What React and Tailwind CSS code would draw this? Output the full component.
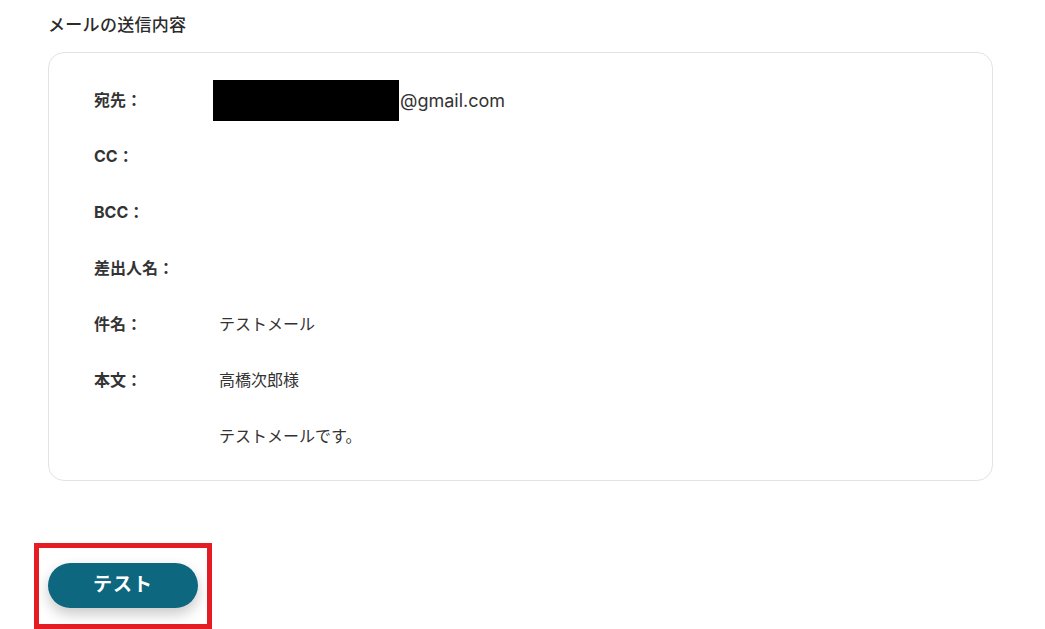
const rows = [
  { label: "宛先：", value: "email" },
  { label: "CC：", value: "" },
  { label: "BCC：", value: "" },
  { label: "差出人名：", value: "" },
  { label: "件名：", value: "テストメール" },
  { label: "本文：", value: "高橋次郎様" },
  { label: "", value: "テストメールです。" },
];

const App = () => {
  return (
    <div
      className="w-[1045px] h-[629px] bg-white overflow-hidden px-[48px] text-[#333]"
      style={{ fontFamily: '"Inter", "Noto Sans CJK JP", sans-serif' }}
    >
      <div className="h-[52px] flex items-center text-[17px] font-medium tracking-[0.3px] text-[#2b2b2b]">
        メールの送信内容
      </div>

      <div className="w-[945px] border border-[#e3e3e3] rounded-[16px] pt-[19px] pb-[16px] pl-[45px]">
        {rows.map((row, i) => (
          <div key={i} className="h-[56px] flex items-center">
            <div className="w-[119px] text-[16px] font-bold text-[#333]">{row.label}</div>
            {row.value === "email" ? (
              <div className="flex items-center">
                <div className="w-[186px] h-[41px] bg-black" />
                <span className="text-[18px] text-[#333] ml-[1px]">@gmail.com</span>
              </div>
            ) : (
              <div className="pl-[6px] text-[16px] text-[#333]">{row.value}</div>
            )}
          </div>
        ))}
      </div>

      <div className="mt-[62px] -ml-[14px] w-[178px] h-[86px] border-[5px] border-[#e31d23] flex items-center justify-center pb-[1px]">
        <button className="w-[150px] h-[45px] rounded-full bg-[#0c677f] text-white text-[19px] font-bold tracking-[1px] shadow-[0_6px_14px_rgba(0,0,0,0.22)]">
          テスト
        </button>
      </div>
    </div>
  );
};

export default App;
